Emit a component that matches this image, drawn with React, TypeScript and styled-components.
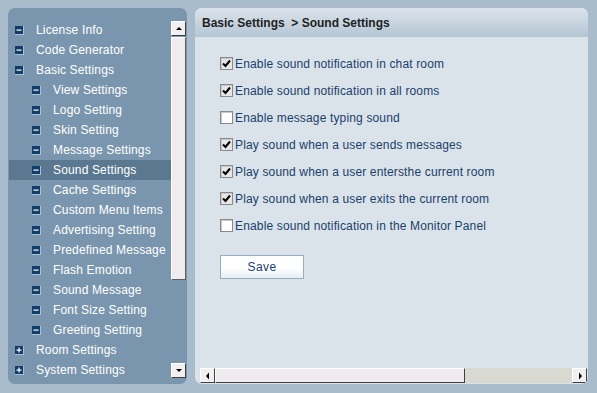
import styled, { createGlobalStyle } from 'styled-components'

const GlobalStyle = createGlobalStyle`
  html, body {
    margin: 0;
    padding: 0;
    background: #a9bccb;
    font-family: 'Liberation Sans', Arial, sans-serif;
  }
`

type NavItem = {
  label: string
  level: 1 | 2
  open: boolean
  active?: boolean
}

const navItems: NavItem[] = [
  { label: 'License Info', level: 1, open: true },
  { label: 'Code Generator', level: 1, open: true },
  { label: 'Basic Settings', level: 1, open: true },
  { label: 'View Settings', level: 2, open: true },
  { label: 'Logo Setting', level: 2, open: true },
  { label: 'Skin Setting', level: 2, open: true },
  { label: 'Message Settings', level: 2, open: true },
  { label: 'Sound Settings', level: 2, open: true, active: true },
  { label: 'Cache Settings', level: 2, open: true },
  { label: 'Custom Menu Items', level: 2, open: true },
  { label: 'Advertising Setting', level: 2, open: true },
  { label: 'Predefined Message', level: 2, open: true },
  { label: 'Flash Emotion', level: 2, open: true },
  { label: 'Sound Message', level: 2, open: true },
  { label: 'Font Size Setting', level: 2, open: true },
  { label: 'Greeting Setting', level: 2, open: true },
  { label: 'Room Settings', level: 1, open: false },
  { label: 'System Settings', level: 1, open: false },
]

const options = [
  { label: 'Enable sound notification in chat room', checked: true },
  { label: 'Enable sound notification in all rooms', checked: true },
  { label: 'Enable message typing sound', checked: false },
  { label: 'Play sound when a user sends messages', checked: true },
  { label: 'Play sound when a user entersthe current room', checked: true },
  { label: 'Play sound when a user exits the current room', checked: true },
  { label: 'Enable sound notification in the Monitor Panel', checked: false },
]

const Arrow = ({ dir }: { dir: 'up' | 'down' | 'left' | 'right' }) => {
  const points = {
    up: '1,5 4,2 7,5',
    down: '1,2 4,5 7,2',
    left: '5,0.5 2,4 5,7.5',
    right: '3,0.5 6,4 3,7.5',
  }[dir]
  return (
    <svg width="8" height="8" viewBox="0 0 8 8">
      <polygon points={points} fill="#000" />
    </svg>
  )
}

const ToggleIcon = ({ open }: { open: boolean }) => (
  <TreeIcon>
    <svg width="8" height="8" viewBox="0 0 8 8">
      <rect x="0" y="0" width="8" height="8" fill="#123d68" />
      <rect x="1.5" y="3.5" width="5" height="1.2" fill="#fff" />
      {!open && <rect x="3.4" y="1.5" width="1.2" height="5" fill="#fff" />}
    </svg>
  </TreeIcon>
)

const App = () => {
  return (
    <>
      <GlobalStyle />
      <Page>
        <Sidebar>
          <NavList>
            {navItems.map((item) => (
              <NavRow key={item.label} $level={item.level} $active={!!item.active}>
                <ToggleIcon open={item.open} />
                <NavLabel>{item.label}</NavLabel>
              </NavRow>
            ))}
          </NavList>
          <VScroll>
            <ScrollButton>
              <Arrow dir="up" />
            </ScrollButton>
            <VThumb />
            <ScrollSpacer />
            <ScrollButton>
              <Arrow dir="down" />
            </ScrollButton>
          </VScroll>
        </Sidebar>

        <Main>
          <Header>Basic Settings  &gt; Sound Settings</Header>
          <Content>
            <OptionList>
              {options.map((opt) => (
                <OptionRow key={opt.label}>
                  <CheckBox $checked={opt.checked}>
                    {opt.checked && (
                      <svg width="9" height="9" viewBox="0 0 9 9">
                        <path d="M1 4.5 L3.5 7 L8 1.5" stroke="#000" strokeWidth="2" fill="none" />
                      </svg>
                    )}
                  </CheckBox>
                  <OptionLabel>{opt.label}</OptionLabel>
                </OptionRow>
              ))}
            </OptionList>
            <SaveButton>Save</SaveButton>
          </Content>
          <HScroll>
            <ScrollButton>
              <Arrow dir="left" />
            </ScrollButton>
            <HThumb />
            <HTrack />
            <ScrollButton>
              <Arrow dir="right" />
            </ScrollButton>
          </HScroll>
        </Main>
      </Page>
    </>
  )
}

export default App

const Page = styled.div`
  display: flex;
  gap: 8px;
  padding: 8px 9px 9px 8px;
  height: 393px;
  width: 597px;
  box-sizing: border-box;
`

const Sidebar = styled.div`
  display: flex;
  width: 179px;
  background: #7a96ae;
  border-radius: 7px;
  padding: 12px 1px 4px 1px;
  box-sizing: border-box;
`

const NavList = styled.div`
  flex: 1;
  display: flex;
  flex-direction: column;
`

const NavRow = styled.div<{ $level: 1 | 2; $active: boolean }>`
  display: flex;
  align-items: center;
  flex-shrink: 0;
  height: 20px;
  padding-left: ${({ $level }) => ($level === 1 ? 6 : 23)}px;
  background: ${({ $active }) => ($active ? '#5b7891' : 'transparent')};
`

const TreeIcon = styled.span`
  display: flex;
  width: 9px;
  height: 9px;
  margin-right: 12px;
  box-sizing: border-box;
  border-right: 1px solid #a9c0d6;
  border-bottom: 1px solid #a9c0d6;
`

const NavLabel = styled.span`
  color: #fff;
  font-size: 12px;
  letter-spacing: 0.15px;
  white-space: nowrap;
`

const VScroll = styled.div`
  display: flex;
  flex-direction: column;
  width: 15px;
  margin: 1px 0 2px;
`

const ScrollButton = styled.div`
  display: flex;
  align-items: center;
  justify-content: center;
  width: 15px;
  height: 15px;
  box-sizing: border-box;
  background: #f1eff1;
  border: 1px solid;
  border-color: #fff #404040 #404040 #fff;
  flex-shrink: 0;
`

const VThumb = styled.div`
  height: 243px;
  margin-top: 1px;
  background: #f0ebef;
  border: 1px solid;
  border-color: #fff #606060 #606060 #fff;
  box-sizing: border-box;
`

const ScrollSpacer = styled.div`
  flex: 1;
`

const Main = styled.div`
  display: flex;
  flex-direction: column;
  width: 393px;
  background: #dae2ea;
  border-radius: 7px;
  overflow: hidden;
`

const Header = styled.div`
  height: 29px;
  display: flex;
  align-items: center;
  padding-left: 7px;
  background: linear-gradient(#dce4eb, #b3c5d3);
  color: #222;
  font-size: 12px;
  font-weight: bold;
  white-space: pre;
`

const Content = styled.div`
  display: flex;
  flex-direction: column;
  align-items: flex-start;
  padding: 13px 0 0 25px;
`

const OptionList = styled.div`
  display: flex;
  flex-direction: column;
`

const OptionRow = styled.div`
  display: flex;
  align-items: center;
  height: 27px;
`

const CheckBox = styled.span<{ $checked: boolean }>`
  display: flex;
  align-items: center;
  justify-content: center;
  width: 13px;
  height: 13px;
  box-sizing: border-box;
  border: 1px solid #8a8a8a;
  background: ${({ $checked }) => ($checked ? '#e6e6e6' : '#fff')};
  box-shadow: inset 1px 1px 0 #c8c8c8;
  margin-right: 2px;
`

const OptionLabel = styled.span`
  color: #1a416b;
  font-size: 12px;
  letter-spacing: 0.15px;
  white-space: nowrap;
`

const SaveButton = styled.button`
  margin-top: 16px;
  width: 84px;
  height: 24px;
  border: 1px solid #98adbf;
  background: linear-gradient(#fff 55%, #e6edf3);
  color: #1a416b;
  font-family: 'Liberation Sans', Arial, sans-serif;
  font-size: 12px;
  letter-spacing: 0.4px;
  padding: 0;
`

const HScroll = styled.div`
  display: flex;
  margin: auto 1px 1px 5px;
  height: 15px;
`

const HThumb = styled.div`
  width: 250px;
  background: #f0ebef;
  border: 1px solid;
  border-color: #fff #404040 #404040 #fff;
  box-sizing: border-box;
`

const HTrack = styled.div`
  flex: 1;
  background: #d8d9d0;
`
